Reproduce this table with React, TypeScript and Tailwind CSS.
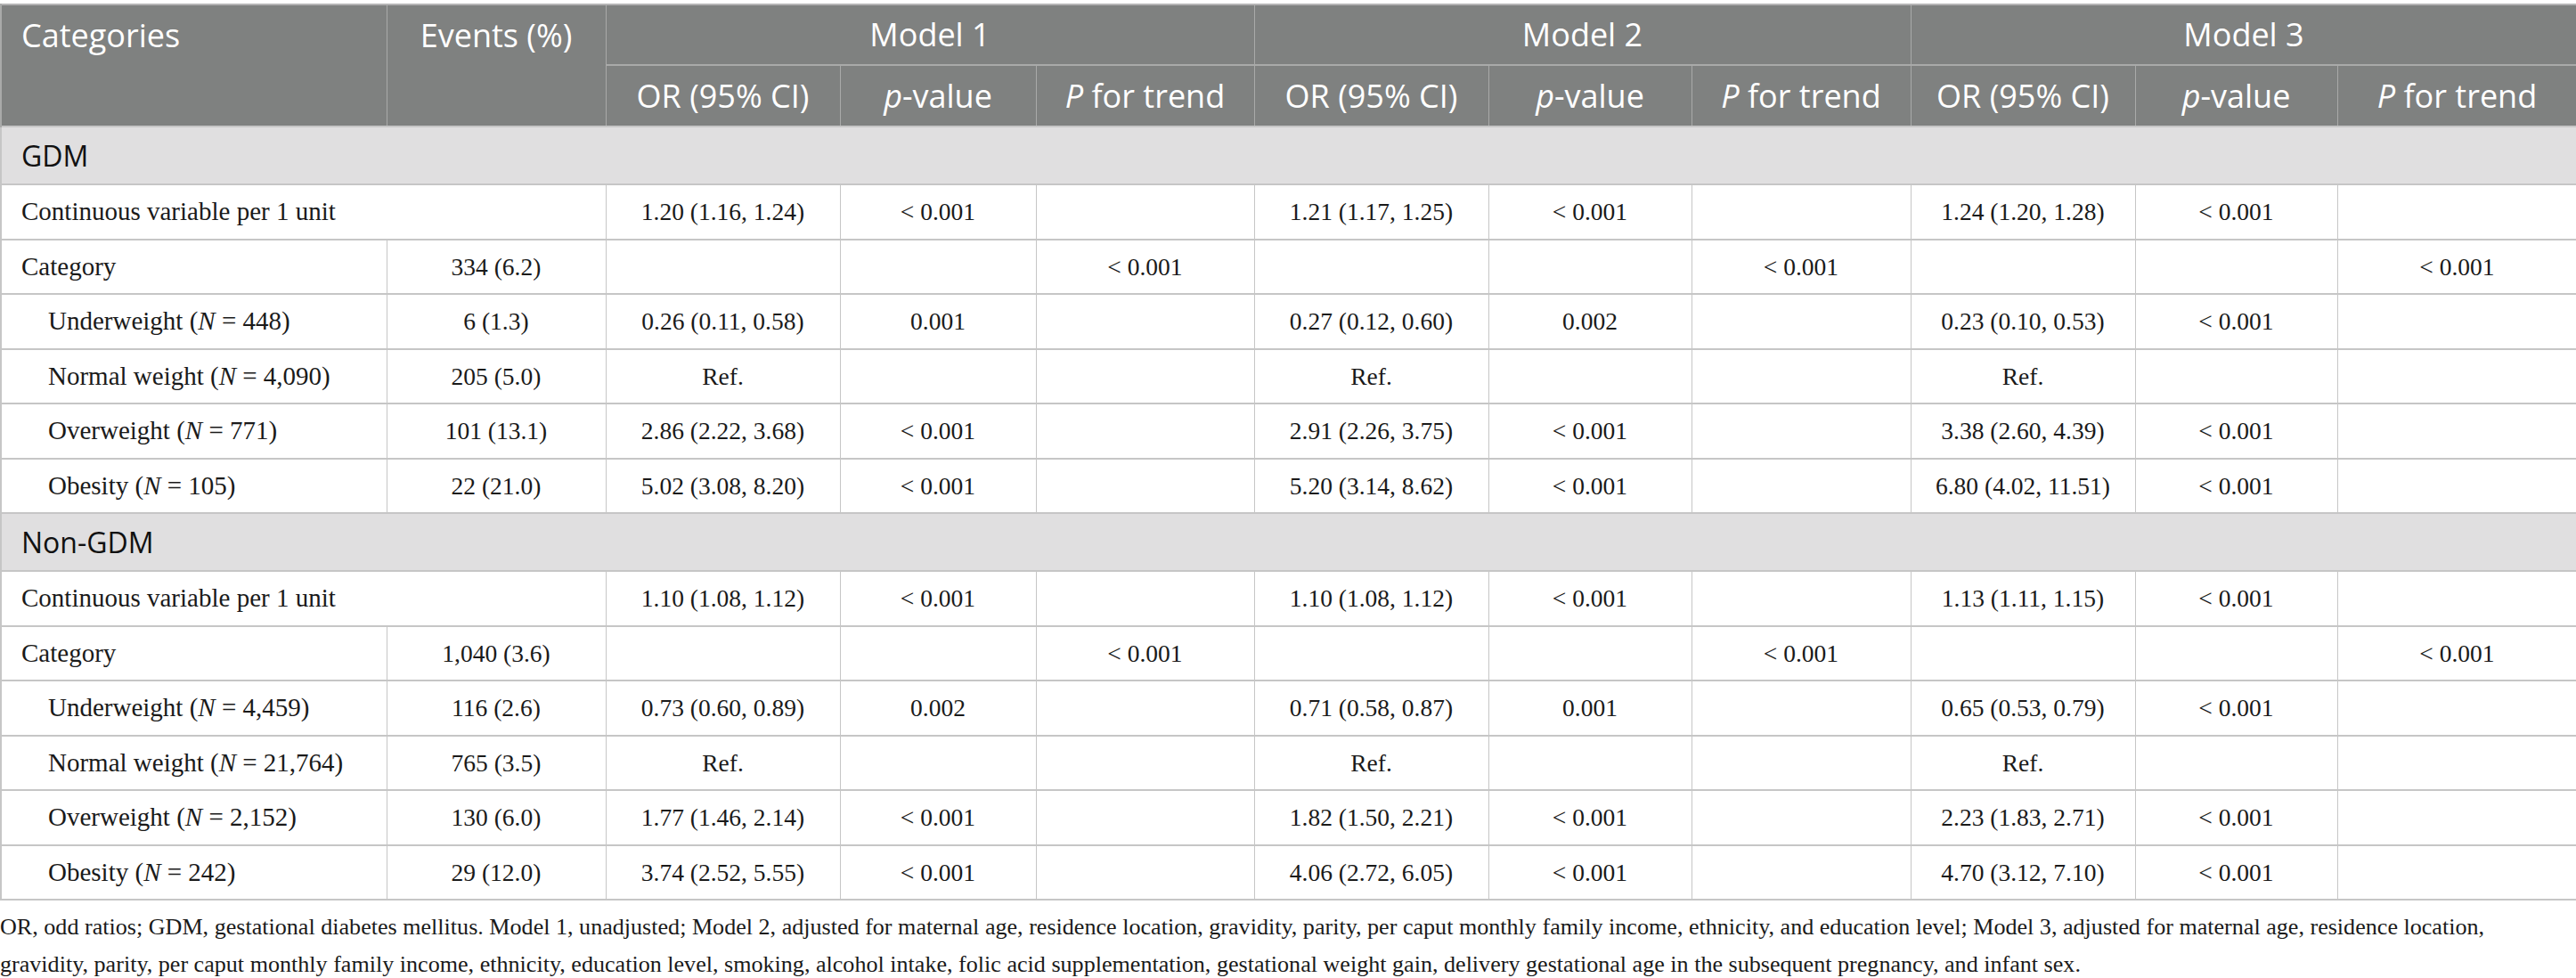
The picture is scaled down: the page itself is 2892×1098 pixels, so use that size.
const sans = "font-['Open_Sans',sans-serif]";
const serif = "font-['Liberation_Serif',serif]";

type Row = {
  label: React.ReactNode;
  indent?: boolean;
  events?: string;
  span?: boolean;
  cells: string[];
};

const N = ({ children }: { children: React.ReactNode }) => <span className="italic">{children}</span>;

const gdm: Row[] = [
  { label: 'Continuous variable per 1 unit', span: true, cells: ['1.20 (1.16, 1.24)', '< 0.001', '', '1.21 (1.17, 1.25)', '< 0.001', '', '1.24 (1.20, 1.28)', '< 0.001', ''] },
  { label: 'Category', events: '334 (6.2)', cells: ['', '', '< 0.001', '', '', '< 0.001', '', '', '< 0.001'] },
  { label: <>Underweight (<N>N</N> = 448)</>, indent: true, events: '6 (1.3)', cells: ['0.26 (0.11, 0.58)', '0.001', '', '0.27 (0.12, 0.60)', '0.002', '', '0.23 (0.10, 0.53)', '< 0.001', ''] },
  { label: <>Normal weight (<N>N</N> = 4,090)</>, indent: true, events: '205 (5.0)', cells: ['Ref.', '', '', 'Ref.', '', '', 'Ref.', '', ''] },
  { label: <>Overweight (<N>N</N> = 771)</>, indent: true, events: '101 (13.1)', cells: ['2.86 (2.22, 3.68)', '< 0.001', '', '2.91 (2.26, 3.75)', '< 0.001', '', '3.38 (2.60, 4.39)', '< 0.001', ''] },
  { label: <>Obesity (<N>N</N> = 105)</>, indent: true, events: '22 (21.0)', cells: ['5.02 (3.08, 8.20)', '< 0.001', '', '5.20 (3.14, 8.62)', '< 0.001', '', '6.80 (4.02, 11.51)', '< 0.001', ''] },
];

const nonGdm: Row[] = [
  { label: 'Continuous variable per 1 unit', span: true, cells: ['1.10 (1.08, 1.12)', '< 0.001', '', '1.10 (1.08, 1.12)', '< 0.001', '', '1.13 (1.11, 1.15)', '< 0.001', ''] },
  { label: 'Category', events: '1,040 (3.6)', cells: ['', '', '< 0.001', '', '', '< 0.001', '', '', '< 0.001'] },
  { label: <>Underweight (<N>N</N> = 4,459)</>, indent: true, events: '116 (2.6)', cells: ['0.73 (0.60, 0.89)', '0.002', '', '0.71 (0.58, 0.87)', '0.001', '', '0.65 (0.53, 0.79)', '< 0.001', ''] },
  { label: <>Normal weight (<N>N</N> = 21,764)</>, indent: true, events: '765 (3.5)', cells: ['Ref.', '', '', 'Ref.', '', '', 'Ref.', '', ''] },
  { label: <>Overweight (<N>N</N> = 2,152)</>, indent: true, events: '130 (6.0)', cells: ['1.77 (1.46, 2.14)', '< 0.001', '', '1.82 (1.50, 2.21)', '< 0.001', '', '2.23 (1.83, 2.71)', '< 0.001', ''] },
  { label: <>Obesity (<N>N</N> = 242)</>, indent: true, events: '29 (12.0)', cells: ['3.74 (2.52, 5.55)', '< 0.001', '', '4.06 (2.72, 6.05)', '< 0.001', '', '4.70 (3.12, 7.10)', '< 0.001', ''] },
];

const widths = ['w-[433px]', 'w-[246px]', 'w-[263px]', 'w-[220px]', 'w-[245px]', 'w-[263px]', 'w-[228px]', 'w-[246px]', 'w-[252px]', 'w-[227px]', 'w-[269px]'];

const th = 'border-x border-[#a9aaa9] px-0 font-normal';
const td = 'border-x border-y-2 border-x-[#c6c6c6] border-y-[#c6c6c6] text-center text-[27.5px]';

function Section({ title, rows }: { title: string; rows: Row[] }) {
  return (
    <>
      <tr className="h-[65px] bg-[#e0dfe0]">
        <td colSpan={11} className={`border-y-2 border-[#c6c6c6] pl-[22px] text-left text-[32px] text-[#111] ${sans}`}>
          {title}
        </td>
      </tr>
      {rows.map((r, i) => (
        <tr key={i} className="h-[61.5px]">
          <td colSpan={r.span ? 2 : 1} className={`${td} text-left text-[29px] ${r.indent ? 'pl-[52px]' : 'pl-[22px]'}`}>
            {r.label}
          </td>
          {!r.span && <td className={td}>{r.events}</td>}
          {r.cells.map((c, j) => (
            <td key={j} className={td}>{c}</td>
          ))}
        </tr>
      ))}
    </>
  );
}

export default function App() {
  const models = ['Model 1', 'Model 2', 'Model 3'];
  return (
    <div className={`w-[2892px] bg-white pt-[4px] text-[#1a1a1a] ${serif}`}>
      <table className="w-[2892px] table-fixed border-collapse">
        <colgroup>
          {widths.map((w, i) => (
            <col key={i} className={w} />
          ))}
        </colgroup>
        <thead className={`bg-[#7f8180] text-[36px] text-white ${sans}`}>
          <tr className="h-[68px] border-t-2 border-[#b4b4b4]">
            <th rowSpan={2} className={`${th} border-l-2 pl-[22px] text-left align-top`}>
              <div className="flex h-[68px] items-center">Categories</div>
            </th>
            <th rowSpan={2} className={`${th} text-center align-top`}>
              <div className="flex h-[68px] items-center justify-center">Events (%)</div>
            </th>
            {models.map((m) => (
              <th key={m} colSpan={3} className={`${th} border-b-2 border-b-[#a9aaa9] text-center`}>
                {m}
              </th>
            ))}
          </tr>
          <tr className="h-[69px]">
            {models.map((m) => (
              <>
                <th key={m + 'a'} className={`${th} text-center`}>OR (95% CI)</th>
                <th key={m + 'b'} className={`${th} text-center`}>
                  <span className="italic">p</span>-value
                </th>
                <th key={m + 'c'} className={`${th} text-center`}>
                  <span className="italic">P</span> for trend
                </th>
              </>
            ))}
          </tr>
        </thead>
        <tbody className="border-l-2 border-[#c6c6c6]">
          <Section title="GDM" rows={gdm} />
          <Section title="Non-GDM" rows={nonGdm} />
        </tbody>
      </table>
      <div className="pt-[9px] text-[26.1px] leading-[42px] whitespace-nowrap text-[#1a1a1a]">
        <div>
          OR, odd ratios; GDM, gestational diabetes mellitus. Model 1, unadjusted; Model 2, adjusted for maternal age, residence location, gravidity, parity, per caput monthly family income, ethnicity, and education level; Model 3, adjusted for maternal age, residence location,
        </div>
        <div>
          gravidity, parity, per caput monthly family income, ethnicity, education level, smoking, alcohol intake, folic acid supplementation, gestational weight gain, delivery gestational age in the subsequent pregnancy, and infant sex.
        </div>
      </div>
    </div>
  );
}
